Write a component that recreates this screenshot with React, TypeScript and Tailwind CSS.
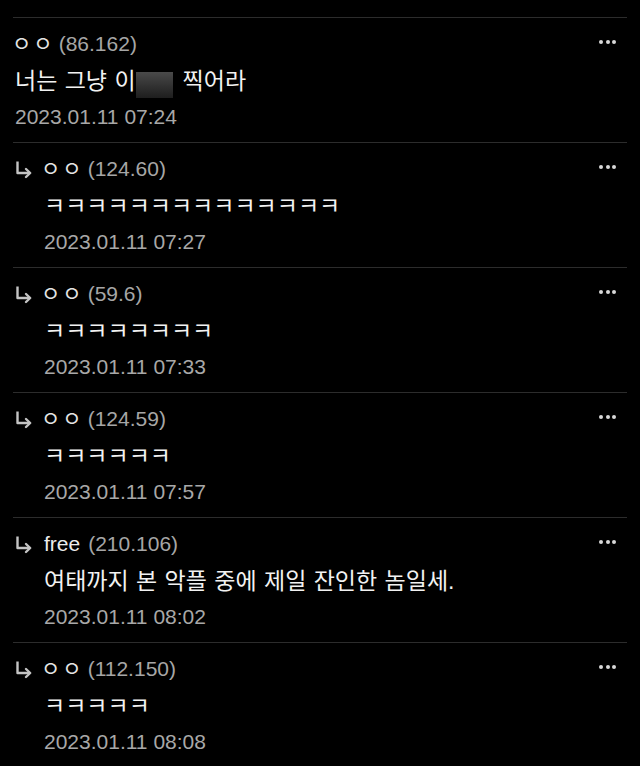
import React from "react";

type C = {
  reply: boolean;
  name: string;
  ip: string;
  body: React.ReactNode;
  date: string;
};

const FONT = { fontFamily: '"Liberation Sans", "Noto Sans CJK KR", sans-serif' };

function Arrow() {
  return (
    <svg width="18" height="19" viewBox="0 0 18 19" fill="none" className="block">
      <path d="M2.5 1.5 V13 H15" stroke="#c4c4c4" strokeWidth="2.4" strokeLinejoin="round" />
      <path d="M11 9 L15.2 13 L11 17" stroke="#c4c4c4" strokeWidth="2.4" strokeLinecap="round" strokeLinejoin="round" />
    </svg>
  );
}

function Dots() {
  return (
    <div className="flex items-center gap-[2.5px] -mt-[4px]">
      <span className="block w-[4px] h-[4px] rounded-full bg-[#d8d8d8]" />
      <span className="block w-[4px] h-[4px] rounded-full bg-[#d8d8d8]" />
      <span className="block w-[4px] h-[4px] rounded-full bg-[#d8d8d8]" />
    </div>
  );
}

function Name({ name }: { name: string }) {
  if (name === "ㅇㅇ") {
    return <span className="text-[21px] tracking-[2px] text-[#e4e4e4] -ml-[3px] -mr-[4px]">ㅇㅇ</span>;
  }
  return <span className="text-[#ececec]">{name}</span>;
}

function Comment({ c }: { c: C }) {
  return (
    <div className="mx-[13px] h-[125px] border-b border-[#2c2c2c] pt-[8px] pl-[2px] pr-[11px] flex">
      {c.reply && (
        <div className="w-[29px] shrink-0 h-[36px] flex items-center pt-[1px]">
          <Arrow />
        </div>
      )}
      <div className="flex-1 flex flex-col">
        <div className="h-[36px] flex items-center justify-between">
          <div className="flex items-center text-[21px] gap-[8px]">
            <Name name={c.name} />
            <span className="text-[#a6a6a6]">({c.ip})</span>
          </div>
          <Dots />
        </div>
        <div className="h-[38px] flex items-center text-[23px] text-[#f2f2f2] [word-spacing:1px]">{c.body}</div>
        <div className="h-[34px] flex items-center text-[21px] text-[#a8a8a8]">{c.date}</div>
      </div>
    </div>
  );
}

const comments: C[] = [
  { reply: true, name: "ㅇㅇ", ip: "118.235", body: "ㅋㅋㅋㅋ", date: "2023.01.11 07:20" },
  {
    reply: false,
    name: "ㅇㅇ",
    ip: "86.162",
    body: (
      <span className="flex items-center">
        <span>너는 그냥 이</span>
        <span className="inline-block w-[37px] h-[26px] mt-[8px] bg-gradient-to-b from-[#4a4a4a] to-[#1e1e1e]" />
        <span className="ml-[10px]">찍어라</span>
      </span>
    ),
    date: "2023.01.11 07:24",
  },
  { reply: true, name: "ㅇㅇ", ip: "124.60", body: "ㅋㅋㅋㅋㅋㅋㅋㅋㅋㅋㅋㅋㅋㅋ", date: "2023.01.11 07:27" },
  { reply: true, name: "ㅇㅇ", ip: "59.6", body: "ㅋㅋㅋㅋㅋㅋㅋㅋ", date: "2023.01.11 07:33" },
  { reply: true, name: "ㅇㅇ", ip: "124.59", body: "ㅋㅋㅋㅋㅋㅋ", date: "2023.01.11 07:57" },
  { reply: true, name: "free", ip: "210.106", body: "여태까지 본 악플 중에 제일 잔인한 놈일세.", date: "2023.01.11 08:02" },
  { reply: true, name: "ㅇㅇ", ip: "112.150", body: "ㅋㅋㅋㅋㅋ", date: "2023.01.11 08:08" },
];

export default function App() {
  return (
    <div className="w-[640px] h-[766px] bg-black overflow-hidden" style={FONT}>
      <div className="-mt-[107px]">
        {comments.map((c, i) => (
          <Comment key={i} c={c} />
        ))}
      </div>
    </div>
  );
}
